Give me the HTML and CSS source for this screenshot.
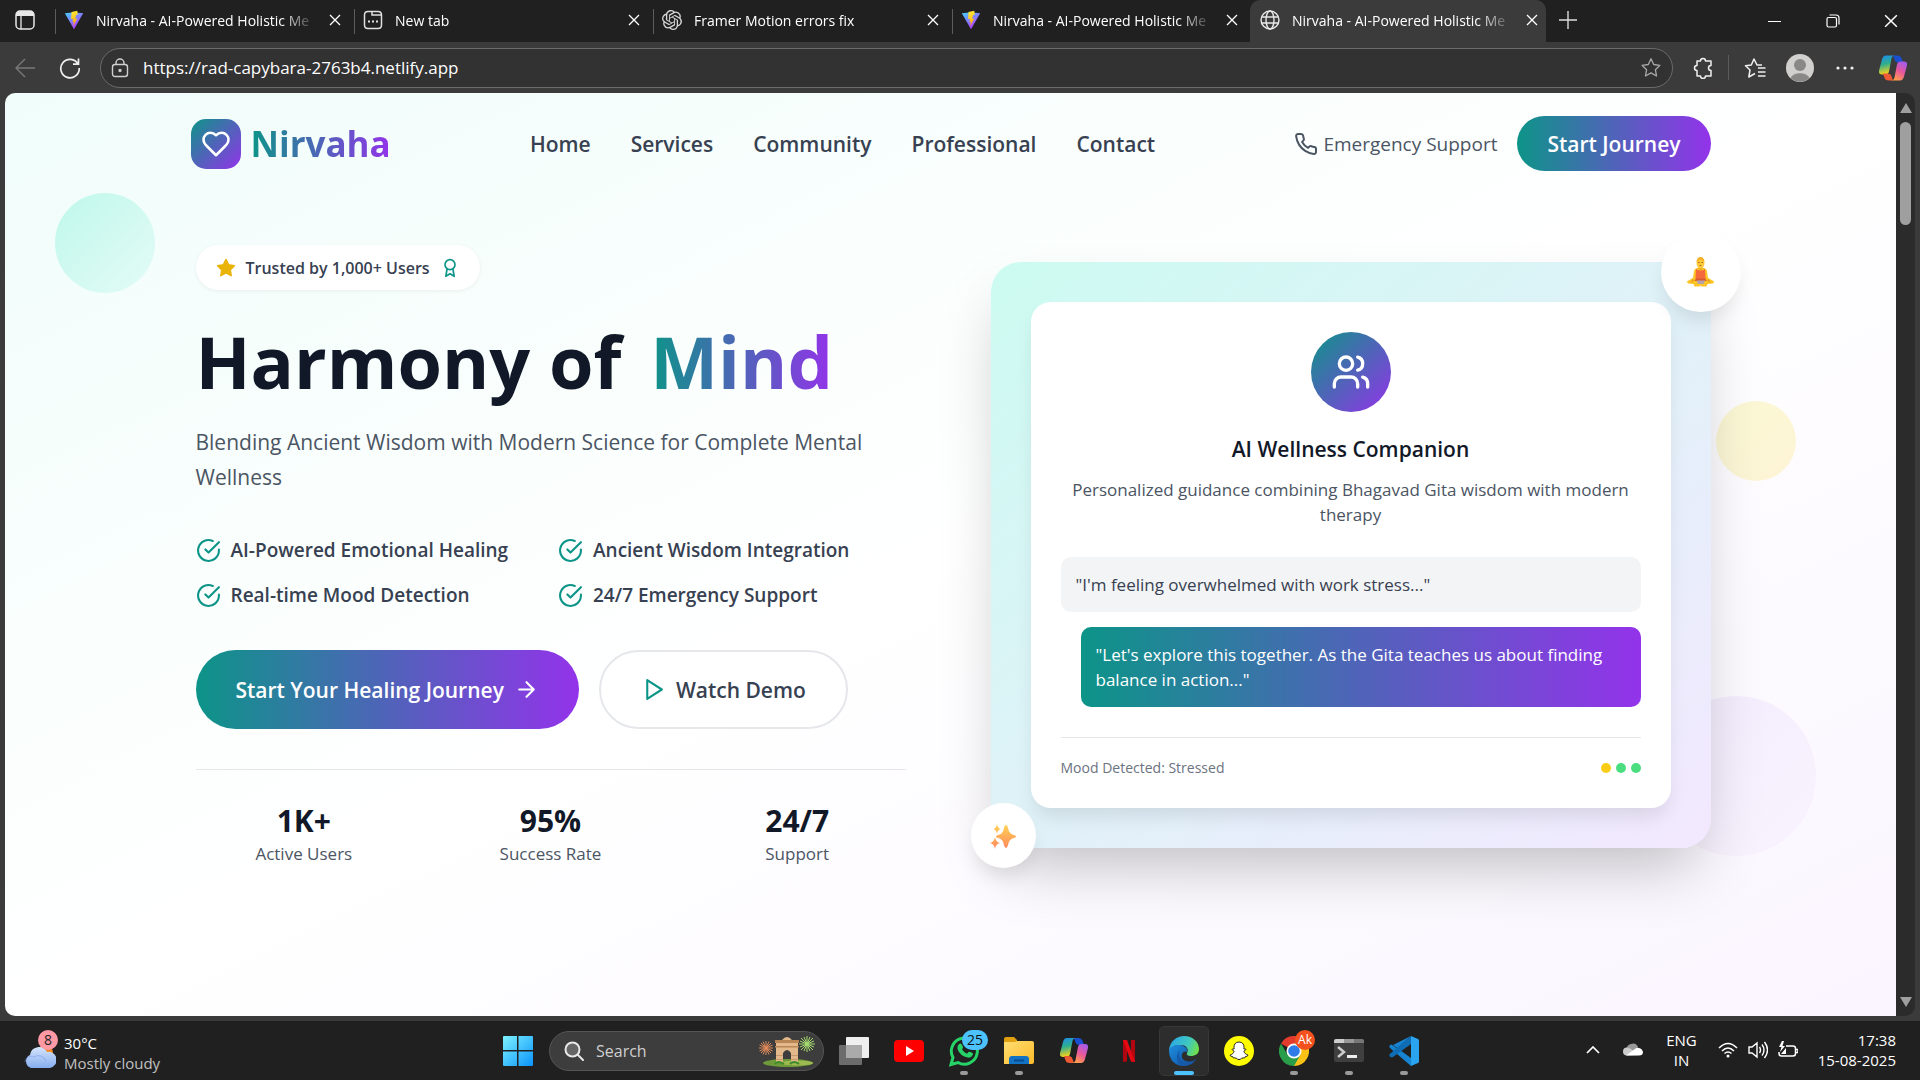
FILE: index.html
```html
<!DOCTYPE html>
<html lang="en">
<head>
<meta charset="utf-8">
<title>Nirvaha - AI-Powered Holistic Mental Wellness</title>
<link rel="stylesheet" href="styles.css">
</head>
<body>
<svg class="defs" aria-hidden="true">
  <defs>
    <linearGradient id="vite-a" x1="0" y1="0" x2=".6" y2="1"><stop offset="0" stop-color="#41d1ff"/><stop offset="1" stop-color="#bd34fe"/></linearGradient>
    <linearGradient id="vite-b" x1=".4" y1="0" x2=".6" y2="1"><stop offset="0" stop-color="#ffea3a"/><stop offset="1" stop-color="#ffa000"/></linearGradient>
    <linearGradient id="cop-a" x1="0" y1="0" x2=".2" y2="1"><stop offset="0" stop-color="#1b8df0"/><stop offset=".5" stop-color="#2fae8e"/><stop offset="1" stop-color="#f2d21f"/></linearGradient>
    <linearGradient id="cop-b" x1=".8" y1="0" x2=".3" y2="1"><stop offset="0" stop-color="#a05cf0"/><stop offset=".5" stop-color="#e9579b"/><stop offset="1" stop-color="#ffa04a"/></linearGradient>
    <linearGradient id="win" x1="0" y1="0" x2="1" y2="1" ><stop offset="0" stop-color="#7df2ff"/><stop offset="1" stop-color="#0a93fb"/></linearGradient>
    <linearGradient id="edge-a" x1="0" y1=".3" x2="1" y2=".6"><stop offset="0" stop-color="#2aa7e6"/><stop offset=".6" stop-color="#3fc8c0"/><stop offset="1" stop-color="#6fe04a"/></linearGradient>
    <linearGradient id="edge-b" x1="0" y1="0" x2="1" y2="1"><stop offset="0" stop-color="#1f8fe0"/><stop offset="1" stop-color="#0c4fa0"/></linearGradient>
    <linearGradient id="spark" x1="0" y1="0" x2="0" y2="1"><stop offset="0" stop-color="#ffd255"/><stop offset="1" stop-color="#ff8a5c"/></linearGradient>
    <linearGradient id="cloud" x1="0" y1="0" x2="0" y2="1"><stop offset="0" stop-color="#d5e4fb"/><stop offset="1" stop-color="#86aef0"/></linearGradient>
    <linearGradient id="folder" x1="0" y1="0" x2="1" y2="1"><stop offset="0" stop-color="#ffdf74"/><stop offset="1" stop-color="#fcb928"/></linearGradient>
    <symbol id="i-vite" viewBox="0 0 24 24"><path d="M1 4 10 3h4l9 1-11 19z" fill="url(#vite-a)"/><path d="M16 1 9 2.500 8.500 11l2.500-.5-.8 4 1.600-.4-.8 5 5-9-2.500.5 1-4.500 2-.3z" fill="url(#vite-b)"/></symbol>
    <symbol id="i-x" viewBox="0 0 12 12"><path d="m1 1 10 10M11 1 1 11" fill="none" stroke="currentColor" stroke-width="1.300"/></symbol>
    <symbol id="i-copilot" viewBox="0 0 28 25"><path d="M14 0h4c3 0 4 1 5 4l1 3h-4c-3 0-4-1-4.500-3z" fill="#1a4fd0"/><path d="M7 0h9c-2 0-3 1-3.500 3L10 16c-.6 2-1.500 3-3.500 3H3C0 19-.5 17 .3 14L3 4Q4 0 7 0z" fill="url(#cop-a)"/><path d="M14 25h-4c-3 0-4-1-5-4l-1-3h4c3 0 4 1 4.500 3z" fill="#ee5a34"/><path d="M21 25h-9c2 0 3-1 3.500-3L18 9c.6-2 1.500-3 3.500-3H25c3 0 3.500 2 2.700 5L25 21q-1 4-4 4z" fill="url(#cop-b)"/></symbol>
    <symbol id="i-check" viewBox="0 0 24 24"><path d="M22 11.080V12a10 10 0 1 1-5.930-9.140M9 11l3 3L22 4" fill="none" stroke="currentColor" stroke-width="2" stroke-linecap="round" stroke-linejoin="round"/></symbol>
  </defs>
</svg>

<header class="browser">
  <div class="tabs">
    <button class="workspaces" aria-label="Tab actions"><svg width="20" height="20" viewBox="0 0 20 20"><rect x="1" y="1" width="18" height="18" rx="4" fill="none" stroke="#e8e8e8" stroke-width="1.500"/><path d="M1 6V5q0-4 4-4h10q4 0 4 4v1z" fill="#e8e8e8"/><path d="M6 6v13" stroke="#e8e8e8" stroke-width="1.300"/></svg></button>
    <div class="tab"><svg width="20" height="20"><use href="#i-vite"/></svg><span class="tab-title">Nirvaha - AI-Powered Holistic Me</span><button aria-label="Close tab"><svg width="12" height="12"><use href="#i-x"/></svg></button></div>
    <div class="tab"><svg width="20" height="20" viewBox="0 0 20 20" fill="none" stroke="#e0e0e0" stroke-width="1.500"><path d="M9 1.500H5Q1.500 1.500 1.500 5v10q0 3.500 3.500 3.500h10q3.500 0 3.500-3.500V5M9 1.500V5h9.500M9 1.500h6q3.500 0 3.500 3.500"/><path d="M5 11.500h2m2 0h2m2 0h2" stroke-width="2"/></svg><span class="tab-title">New tab</span><button aria-label="Close tab"><svg width="12" height="12"><use href="#i-x"/></svg></button></div>
    <div class="tab"><svg width="20" height="20" viewBox="0 0 24 24" fill="#d8d8d8"><path d="M22.280 9.820a5.980 5.980 0 0 0-.52-4.910 6.050 6.050 0 0 0-6.510-2.900A6.070 6.070 0 0 0 4.980 4.180a5.980 5.980 0 0 0-4 2.900 6.050 6.050 0 0 0 .75 7.100 5.980 5.980 0 0 0 .51 4.910 6.050 6.050 0 0 0 6.510 2.900A5.980 5.980 0 0 0 13.260 24a6.060 6.060 0 0 0 5.770-4.210 5.990 5.990 0 0 0 4-2.900 6.060 6.060 0 0 0-.75-7.070zM13.260 22.430a4.480 4.480 0 0 1-2.880-1.040l.14-.08 4.780-2.760a.8.8 0 0 0 .39-.68v-6.740l2.020 1.170v5.620a4.500 4.500 0 0 1-4.450 4.510zM3.600 18.300a4.470 4.470 0 0 1-.54-3.010l.15.09 4.780 2.750a.77.77 0 0 0 .78 0l5.840-3.370v2.330l-4.870 2.850a4.500 4.500 0 0 1-6.140-1.640zM2.340 7.900a4.490 4.490 0 0 1 2.370-1.980v5.680a.77.77 0 0 0 .39.680l5.810 3.350-2.020 1.170-4.830-2.790A4.500 4.500 0 0 1 2.340 7.870zm16.600 3.860-5.840-3.390 2.020-1.160 4.830 2.790a4.490 4.490 0 0 1-.68 8.100v-5.680a.79.79 0 0 0-.33-.66zm2.010-3.030-.14-.08-4.780-2.780a.78.78 0 0 0-.78 0L9.410 9.230V6.900l4.860-2.810a4.500 4.500 0 0 1 6.680 4.660zM8.310 12.860l-2.020-1.160V6.070a4.500 4.500 0 0 1 7.380-3.450l-.14.08-4.780 2.760a.8.8 0 0 0-.39.68zm1.090-2.360L12 9l2.610 1.500v3L12 15l-2.610-1.500z"/></svg><span class="tab-title">Framer Motion errors fix</span><button aria-label="Close tab"><svg width="12" height="12"><use href="#i-x"/></svg></button></div>
    <div class="tab"><svg width="20" height="20"><use href="#i-vite"/></svg><span class="tab-title">Nirvaha - AI-Powered Holistic Me</span><button aria-label="Close tab"><svg width="12" height="12"><use href="#i-x"/></svg></button></div>
    <div class="tab active"><svg width="20" height="20" viewBox="0 0 20 20" fill="none" stroke="#e8e8e8" stroke-width="1.400"><circle cx="10" cy="10" r="9"/><ellipse cx="10" cy="10" rx="4" ry="9"/><path d="M2 7h16M2 13h16"/></svg><span class="tab-title">Nirvaha - AI-Powered Holistic Me</span><button aria-label="Close tab"><svg width="12" height="12"><use href="#i-x"/></svg></button></div>
    <button class="new-tab" aria-label="New tab"><svg width="18" height="18" viewBox="0 0 18 18"><path d="M9 0v18M0 9h18" stroke="#ddd" stroke-width="1.400"/></svg></button>
    <div class="window-controls">
      <button aria-label="Minimize"><svg width="14" height="14" viewBox="0 0 14 14"><path d="M0 7.500h13" stroke="#fff"/></svg></button>
      <button aria-label="Restore"><svg width="14" height="14" viewBox="0 0 14 14" fill="none" stroke="#fff" stroke-width="1.200"><rect x="1" y="3.500" width="9.500" height="9.500" rx="1.500"/><path d="M3.500 1H10q3 0 3 3v6.500"/></svg></button>
      <button aria-label="Close"><svg width="14" height="14"><use href="#i-x"/></svg></button>
    </div>
  </div>
  <div class="toolbar">
    <button class="tool dim" aria-label="Back"><svg width="22" height="22" viewBox="0 0 22 22" fill="none" stroke="currentColor" stroke-width="1.400"><path d="M21 11H2M11 2l-9 9 9 9"/></svg></button>
    <button class="tool" aria-label="Refresh"><svg width="22" height="22" viewBox="0 0 22 22" fill="none" stroke="currentColor" stroke-width="1.700"><path d="M19 7A9.200 9.200 0 1 0 20.200 11M19.500 1.500V7.200H14"/></svg></button>
    <div class="address">
      <svg width="18" height="20" viewBox="0 0 18 20" fill="none" stroke="#d0d0d0" stroke-width="1.400"><rect x="1.500" y="6.500" width="15" height="12" rx="2.500"/><path d="M5 6.500V5a4 4 0 0 1 8 0v1.500"/><circle cx="9" cy="12.500" r="1" fill="#d0d0d0"/></svg>
      <input aria-label="Address" type="text" value="https://rad-capybara-2763b4.netlify.app">
      <svg width="22" height="21" viewBox="0 0 24 24" fill="none" stroke="#a8a8a8" stroke-width="1.500" stroke-linejoin="round"><path d="m12 2 3.100 6.600 7.100.9-5.200 5 1.300 7.200L12 18.200l-6.300 3.500L7 14.500l-5.200-5 7.100-.9z"/></svg>
    </div>
    <button class="tool ext" aria-label="Extensions"><svg width="20" height="22" viewBox="0 0 20 22" fill="none" stroke="currentColor" stroke-width="1.500" stroke-linejoin="round"><path d="M4 4h3.500a2.500 2.500 0 0 1 5 0H18v4.500a2.500 2.500 0 0 0 0 5V19h-5.500a2.500 2.500 0 0 1-5 0H4v-5.500a2.500 2.500 0 0 1 0-5z"/></svg></button>
    <span class="tool-sep"></span>
    <button class="tool fav" aria-label="Favorites"><svg width="22" height="22" viewBox="0 0 22 22" fill="none" stroke="currentColor" stroke-width="1.500" stroke-linejoin="round"><path d="M18 8h-5L10 2 7.300 8 1.500 8.800 6 13l-1.200 7L11 16.500M14 11h7.500M14 15h7.500M14 19h7.500"/></svg></button>
    <button class="tool profile" aria-label="Profile"><svg width="28" height="28" viewBox="0 0 28 28"><circle cx="14" cy="14" r="14" fill="#d2d0ce"/><circle cx="14" cy="11" r="6" fill="#8a8886"/><path d="M4.500 24a10 7 0 0 1 19 0 14 14 0 0 1-19 0z" fill="#8a8886"/></svg></button>
    <button class="tool more" aria-label="Settings and more"><svg width="18" height="4" viewBox="0 0 18 4" fill="currentColor"><circle cx="2" cy="2" r="1.600"/><circle cx="9" cy="2" r="1.600"/><circle cx="16" cy="2" r="1.600"/></svg></button>
    <button class="tool copilot" aria-label="Copilot"><svg width="28" height="26"><use href="#i-copilot"/></svg></button>
  </div>
</header>

<div class="viewport">
  <div class="page">
    <span class="blob teal"></span><span class="blob yellow"></span><span class="blob purple"></span>
    <nav class="nav wrap">
      <a class="brand" href="#"><span class="brand-mark"><svg width="30" height="30" viewBox="0 0 24 24" fill="none" stroke="#fff" stroke-width="2" stroke-linejoin="round"><path d="M19 14c1.490-1.460 3-3.210 3-5.500A5.500 5.500 0 0 0 16.500 3c-1.760 0-3 .5-4.500 2-1.500-1.500-2.740-2-4.500-2A5.500 5.500 0 0 0 2 8.500c0 2.300 1.500 4.050 3 5.500l7 7Z"/></svg></span><span class="brand-name">Nirvaha</span></a>
      <div class="links"><a href="#">Home</a><a href="#">Services</a><a href="#">Community</a><a href="#">Professional</a><a href="#">Contact</a></div>
      <div class="actions">
        <a class="emergency" href="#"><svg width="24" height="24" viewBox="0 0 24 24" fill="none" stroke="currentColor" stroke-width="2" stroke-linejoin="round"><path d="M22 16.920v3a2 2 0 0 1-2.180 2 19.790 19.790 0 0 1-8.630-3.070 19.500 19.500 0 0 1-6-6 19.790 19.790 0 0 1-3.070-8.670A2 2 0 0 1 4.110 2h3a2 2 0 0 1 2 1.720 12.840 12.840 0 0 0 .7 2.810 2 2 0 0 1-.45 2.110L8.090 9.910a16 16 0 0 0 6 6l1.270-1.270a2 2 0 0 1 2.110-.45 12.840 12.840 0 0 0 2.810.7A2 2 0 0 1 22 16.920z"/></svg>Emergency Support</a>
        <button class="start">Start Journey</button>
      </div>
    </nav>

    <main class="hero wrap">
      <section class="intro">
        <p class="badge"><svg width="20" height="20" viewBox="0 0 24 24"><path d="m12 2 3.090 6.260L22 9.270l-5 4.870 1.180 6.880L12 17.770l-6.180 3.250L7 14.140 2 9.270l6.910-1.010z" fill="#eab308" stroke="#eab308" stroke-width="2" stroke-linejoin="round"/></svg>Trusted by 1,000+ Users<svg width="20" height="20" viewBox="0 0 24 24" fill="none" stroke="#0d9488" stroke-width="2" stroke-linejoin="round"><circle cx="12" cy="8" r="6"/><path d="M15.477 12.890 17 22l-5-3-5 3 1.523-9.110"/></svg></p>
        <h1>Harmony of <span>Mind</span></h1>
        <p class="lead">Blending Ancient Wisdom with Modern Science for Complete Mental Wellness</p>
        <ul class="features">
          <li><svg width="25" height="25"><use href="#i-check"/></svg>AI-Powered Emotional Healing</li>
          <li><svg width="25" height="25"><use href="#i-check"/></svg>Ancient Wisdom Integration</li>
          <li><svg width="25" height="25"><use href="#i-check"/></svg>Real-time Mood Detection</li>
          <li><svg width="25" height="25"><use href="#i-check"/></svg>24/7 Emergency Support</li>
        </ul>
        <div class="cta">
          <button class="primary">Start Your Healing Journey<svg width="25" height="25" viewBox="0 0 24 24" fill="none" stroke="#fff" stroke-width="2" stroke-linecap="round" stroke-linejoin="round"><path d="M5 12h14M12 5l7 7-7 7"/></svg></button>
          <button class="secondary"><svg width="25" height="25" viewBox="0 0 24 24" fill="none" stroke="#0d9488" stroke-width="2" stroke-linejoin="round"><path d="m6 3 14 9-14 9z"/></svg>Watch Demo</button>
        </div>
        <dl class="stats">
          <div><dd>1K+</dd><dt>Active Users</dt></div>
          <div><dd>95%</dd><dt>Success Rate</dt></div>
          <div><dd>24/7</dd><dt>Support</dt></div>
        </dl>
      </section>

      <section class="showcase">
        <div class="card">
          <span class="avatar"><svg width="40" height="40" viewBox="0 0 24 24" fill="none" stroke="#fff" stroke-width="2" stroke-linecap="round" stroke-linejoin="round"><path d="M16 21v-2a4 4 0 0 0-4-4H6a4 4 0 0 0-4 4v2"/><circle cx="9" cy="7" r="4"/><path d="M22 21v-2a4 4 0 0 0-3-3.870M16 3.130a4 4 0 0 1 0 7.750"/></svg></span>
          <h2>AI Wellness Companion</h2>
          <p class="desc">Personalized guidance combining Bhagavad Gita wisdom with modern therapy</p>
          <p class="bubble user">"I'm feeling overwhelmed with work stress..."</p>
          <p class="bubble bot">"Let's explore this together. As the Gita teaches us about finding balance in action..."</p>
          <div class="mood"><span>Mood Detected: Stressed</span><span class="dots"><i></i><i></i><i></i></span></div>
        </div>
        <span class="float lotus"><svg width="27" height="31" viewBox="0 0 27 31"><path d="M10 11q-2.500.5-3 3l-1 7-5.500 3q-1 2 1 2.500l5 .5 1 2.500h5l1-1 1 1h5l1-2.500 5-.5q2-.5 1-2.500L21 21l-1-7q-.5-2.500-3-3z" fill="#ffc526"/><path d="M6 21.500 3 26l4-2zM21 21.500l3 4.500-4-2z" fill="#e79c1c"/><path d="M9 12q4.500 3 9 0l.5 10h-10z" fill="#f56a3c"/><path d="M9 21.500h9.500l1 2.500h-12z" fill="#dc5a30"/><path d="M9.500 23.500h8.500l-1.500 3.500h-5.500z" fill="#b3a3ae"/><path d="M11.500 9h4v3q-2 2-4 0z" fill="#e8a41c"/><ellipse cx="13.500" cy="6" rx="4" ry="5.500" fill="#ffc93c"/><path d="M9.500 5q.5-5 4-5t4 5q-2-2.500-4-2.500t-4 2.500z" fill="#f3b224"/><path d="M11 5.500h1.500M14.500 5.500H16M12.700 8.500h1.600" stroke="#a5671a"/></svg></span>
        <span class="float sparkle"><svg width="26" height="26" viewBox="0 0 26 26" fill="url(#spark)"><path d="M16 2q1.500 0 2 3 1 6 6 7 2 .5 2 1.500t-2 1.500q-5 1-6 7-.5 3-2 3t-2-3q-1-6-6-7-2-.5-2-1.500t2-1.500q5-1 6-7 .5-3 2-3z"/><path d="M7 1q.5 4 3.500 5Q7.500 7 7 11 6.500 7 3.500 6 6.500 5 7 1zM5 14q.7 5 5 6-4.300 1-5 6-.7-5-5-6 4.300-1 5-6z"/></svg></span>
      </section>
    </main>
  </div>
  <div class="scrollbar"><span class="up"></span><span class="thumb"></span><span class="down"></span></div>
</div>

<footer class="taskbar">
  <button class="weather" aria-label="Weather">
    <span class="weather-icon"><svg width="32" height="26" viewBox="0 0 32 26"><circle cx="21" cy="10" r="8" fill="#f58a1c"/><path d="M7 25a7 7 0 0 1-1-13 9 9 0 0 1 17-3 8 8 0 0 1 3 16z" fill="url(#cloud)"/><path d="M1 19a6 6 0 0 1 9-5 8 8 0 0 1 12 4" fill="none" stroke="#6f97e6" opacity=".5"/></svg><b>8</b></span>
    <span class="weather-text"><span>30°C</span><span>Mostly cloudy</span></span>
  </button>
  <div class="apps">
    <button class="app" aria-label="Start"><svg width="30" height="30" viewBox="0 0 30 30"><path d="M0 1q0-1 1-1h13v14H0zM15.500 0H29q1 0 1 1v13H15.500zM0 15.500h14V30H1q-1 0-1-1zM15.500 15.500H30V29q0 1-1 1H15.500z" fill="url(#win)"/></svg></button>
    <label class="search"><svg width="20" height="20" viewBox="0 0 20 20" fill="none" stroke="#e8e8e8" stroke-width="2"><circle cx="8.500" cy="8.500" r="7" fill="#666"/><path d="m14 14 5 5" stroke-linecap="round"/></svg><input type="text" placeholder="Search" aria-label="Search">
      <svg width="56" height="32" viewBox="0 0 56 32"><ellipse cx="29" cy="28" rx="25" ry="4" fill="#6f9a3a"/><ellipse cx="38" cy="28" rx="16" ry="2.500" fill="#9dbb50"/><path d="m7 6 0 14M0 13h14M2 8l10 10M12 8 2 18M4 6.500l6 13M10 6.500l-6 13M.6 10l13 6M13.600 10l-13 6" stroke="#e08a5a" stroke-width="1"/><path d="M48 1v16M40 9h16M42 3l12 12M54 3 42 15M45 2l6 14M51 2l-6 14M41 6l14 6M55 6l-14 6" stroke="#a8dc70" stroke-width="1"/><path d="M17 28V5h6q5-6 10 0h6v23h-7V18q-4-6-8 0v10z" fill="#e3b98c"/><path d="M16 5h24v3H16zM16 11h24v1.500H16z" fill="#b98555"/><path d="M17 20h7v1h-7zM32 20h7v1h-7zM17 24h7v1h-7zM32 24h7v1h-7z" fill="#c89868"/><path d="M16 29q3-4 9 0M31 29q4-4 9 0" stroke="#3f8a2a" stroke-width="2" fill="none"/></svg></label>
    <button class="app" aria-label="Task view"><svg width="30" height="28" viewBox="0 0 30 28"><rect x="7" width="23" height="21" rx="1" fill="#efefef"/><rect y="8" width="23" height="20" rx="1" fill="#6c6c6c"/><path d="M7 8h16v13H7z" fill="#aaa"/></svg></button>
    <button class="app" aria-label="YouTube"><svg width="30" height="22" viewBox="0 0 30 22"><rect width="30" height="22" rx="4" fill="#f00"/><path d="m12 6 8 5-8 5z" fill="#fff"/></svg></button>
    <button class="app running" aria-label="WhatsApp"><svg width="32" height="32" viewBox="0 0 32 32"><path d="M3 29.500 5 22.500a13 13 0 1 1 5 5z" fill="none" stroke="#25d366" stroke-width="3"/><path d="M11 9q2-1.500 3 1l1 2q.3 1-1 2.200 2 3.500 5 4.600l1.500-1.800q.8-.6 1.500-.2l2.500 1.300q1 .6.300 2-1.500 3-5 2.500Q12 21 9.500 14 9 10.500 11 9z" fill="#25d366"/></svg><b class="count">25</b></button>
    <button class="app running" aria-label="File Explorer"><svg width="30" height="28" viewBox="0 0 30 28"><path d="M0 2q0-2 2-2h8l3 3v5H0z" fill="#e0a010"/><path d="M0 6q0-1 1-1h10l2-1h15q2 0 2 2v19q0 2-2 2H0z" fill="url(#folder)"/><path d="M5 27v-5q0-3 3-3h14q3 0 3 3v5z" fill="#1272c4"/><path d="M10 23.500h10" stroke="#0a4c90" stroke-width="2"/></svg></button>
    <button class="app" aria-label="Copilot"><svg width="28" height="25"><use href="#i-copilot"/></svg></button>
    <button class="app" aria-label="Netflix"><svg width="12" height="22" viewBox="0 0 12 22"><path d="M0 0h4v21.500l-4 .5zM8 0h4v22l-4-.5z" fill="#b1060f"/><path d="M0 0h4l8 22-4-.5z" fill="#e50914"/></svg></button>
    <button class="app current" aria-label="Microsoft Edge"><svg width="30" height="30" viewBox="0 0 30 30"><path d="M0 14C1 5 8 0 15 0c9 0 15 6 15 13 0 5-4 7-8 7-3 0-5-1-4-3 2-3 0-8-6-8-6 0-10 2-12 5z" fill="url(#edge-a)"/><path d="M0 14C2 10 7 8.500 11 9c5 .5 8 4 7 7-1-1-4-1-5 2-2 6 5 9 11 7-3 4-8 5-11 5C4 29 0 22 0 14z" fill="url(#edge-b)"/><path d="M11 14c-3 7 2 14 9 12 3 0 6-2 7-3.500.5 1-4 7.500-12 7.500-6-1-10-9-4-16z" fill="#1559a8"/></svg></button>
    <button class="app" aria-label="Snapchat"><svg width="30" height="30" viewBox="0 0 30 30"><circle cx="15" cy="15" r="15" fill="#fffc00"/><path d="M15 6c3.500 0 5.200 2.500 5 5.500l-.1 1.500c1 .3 1.800-.5 2 .3s-1.500 1.300-2 1.900c.5 2 2 3.300 4 3.800.2 1.200-1.700 1.400-2.700 1.700l-.5 1.200c-1 0-2-.2-3 .4-1 .7-1.700 1.300-2.700 1.300s-1.700-.6-2.700-1.300c-1-.6-2-.4-3-.4l-.5-1.200c-1-.3-2.900-.5-2.700-1.700 2-.5 3.500-1.800 4-3.800-.5-.6-2.200-1.100-2-1.900s1 0 2-.3L10 11.500C9.800 8.500 11.500 6 15 6z" fill="#fff" stroke="#222" stroke-width="1"/></svg></button>
    <button class="app running" aria-label="Google Chrome"><svg width="30" height="30" viewBox="0 0 30 30"><path d="M15 15 2 7.500A15 15 0 0 1 28 7.500H15z" fill="#e33b2e"/><path d="M15 15v15A15 15 0 0 0 28 7.500H15z" fill="#fbc116"/><path d="M8.500 18.700 2 7.500A15 15 0 0 0 15 30l6.500-11.200L15 15z" fill="#2a9d4a"/><circle cx="15" cy="15" r="7.500" fill="#fff"/><circle cx="15" cy="15" r="5.800" fill="#2f7be8"/></svg><b class="who">Ak</b></button>
    <button class="app running" aria-label="Terminal"><svg width="30" height="23" viewBox="0 0 30 23"><rect width="30" height="23" rx="2" fill="#3f3f3f"/><path d="M0 4V2q0-2 2-2h8v4z" fill="#ccc"/><path d="M10 0h10v4H10z" fill="#999"/><path d="M20 0h8q2 0 2 2v2H20z" fill="#777"/><path d="m4 8 6 5-6 5" fill="none" stroke="#ccc" stroke-width="2.500"/><path d="M13 17.500h10" stroke="#eee" stroke-width="3"/></svg></button>
    <button class="app running" aria-label="Visual Studio Code"><svg width="30" height="30" viewBox="0 0 30 30"><path d="M22 0 8 12.500 2.500 8.500.5 9.500v2L22 30V22L4 9z" fill="#1684d0"/><path d="m22 8-18 13-1.500.5-2-1.200v-2L22 0z" fill="#0f6db5"/><path d="m22 0 7 3q1 .5 1 1.500v21q0 1-1 1.500l-7 3z" fill="#2aa4f0"/></svg></button>
  </div>
  <div class="tray">
    <svg class="chev" width="14" height="8" viewBox="0 0 14 8" fill="none" stroke="#fff" stroke-width="1.700"><path d="m1 7 6-6 6 6"/></svg>
    <svg class="one" width="20" height="13" viewBox="0 0 20 13"><path d="M4 8a5 5 0 0 1 4-7q5-2 7 3l-4 5z" fill="#999"/><path d="M4 12.500a4 4 0 0 1 0-8q2 0 4 1.500l8 6z" fill="#ccc"/><path d="M3 12.500 12 6q2-2 4-1 3 .5 4 4 0 3.500-4 3.500z" fill="#fff"/></svg>
    <span class="lang"><span>ENG</span><span>IN</span></span>
    <svg width="20" height="16" viewBox="0 0 20 16" fill="none" stroke="#fff" stroke-width="1.500"><path d="M1 6q9-9 18 0M4 9q6-6 12 0M6.500 11.500q3.500-3 7 0"/><circle cx="10" cy="14" r="1.500" fill="#fff" stroke="none"/></svg>
    <svg width="20" height="18" viewBox="0 0 20 18" fill="none" stroke="#fff" stroke-width="1.400"><path d="M1 6h3l5-4v14l-5-4H1zM11.500 6q2 3 0 6M14 3.500q4 5.500 0 11M16.500 1q6 8 0 16"/></svg>
    <svg width="20" height="17" viewBox="0 0 20 17" fill="none" stroke="#fff" stroke-width="1.500"><path d="M8 5h7q2.500 0 2.500 2.500v5q0 2.500-2.500 2.500H3.500Q1 15 1 12.500V11M17.500 8.500H20v3h-2.500"/><path d="M4 0 1 6h2.500L2 11l5-6H4.500L6 0zM3 13l5-6v6z" fill="#fff" stroke="none"/></svg>
    <span class="clock"><span>17:38</span><span>15-08-2025</span></span>
  </div>
</footer>
</body>
</html>
```
FILE: styles.css
```css
* { box-sizing: border-box; }
:root {
  --brand-gradient: linear-gradient(to right, #0d9488, #9333ea);
  --brand-diagonal: linear-gradient(to bottom right, #0d9488, #9333ea);
}
body {
  margin: 0;
  min-height: 100vh;
  display: flex;
  flex-direction: column;
  background: #3b3b3b;
  font-family: "Segoe UI", "Open Sans", "Noto Sans", sans-serif;
  color: #374151;
}
h1, h2, p, ul, dl, dd { margin: 0; padding: 0; }
button { border: 0; padding: 0; background: none; font: inherit; color: inherit; }
input { border: 0; padding: 0; background: none; font: inherit; color: inherit; outline: 0; min-width: 0; }
a { color: inherit; text-decoration: none; }
svg { display: block; flex: none; }
.defs { position: absolute; width: 0; height: 0; }

/* Browser chrome */
.browser { color: #fff; }
.tabs { display: flex; height: 42px; background: #202020; font-size: 14px; }
.workspaces { width: 50px; display: grid; place-items: center; padding-bottom: 2px; }
.tab {
  flex: 0 1 299px;
  display: flex;
  align-items: center;
  gap: 12px;
  padding: 0 7px 2px 14px;
  position: relative;
  min-width: 0;
}
.tab::before { content: ""; position: absolute; left: 5px; top: 9px; height: 25px; width: 1px; background: #5c5c5c; }
.tab.active { margin-left: 4px; padding-left: 10px; flex-basis: 296px; background: #3b3b3b; border-radius: 10px 10px 0 0; }
.tab.active::before { display: none; }
.tab-title {
  flex: 1;
  overflow: hidden;
  white-space: nowrap;
  mask-image: linear-gradient(to right, #000 84%, transparent);
}
.tab > button { width: 14px; display: grid; place-items: center; }
.new-tab { width: 44px; display: grid; place-items: center; padding-bottom: 2px; }
.window-controls { margin-left: auto; display: flex; }
.window-controls button { width: 58px; display: grid; place-items: center; }
.toolbar { display: flex; align-items: center; height: 51px; padding: 0 13px 0 14px; }
.tool { display: grid; place-items: center; flex: none; color: #f0f0f0; }
.tool.dim { color: #787878; margin-right: 23px; }
.address {
  flex: 1;
  display: flex;
  align-items: center;
  gap: 14px;
  height: 40px;
  margin: 0 20px 0 19px;
  padding: 0 10px;
  border: 1px solid #6b6b6b;
  border-radius: 20px;
  background: #323232;
}
.address input { flex: 1; font-size: 17px; }
.tool-sep { width: 1px; height: 25px; margin: 0 15px; background: #5c5c5c; }
.tool.profile { margin: 0 22px 0 20px; }
.tool.copilot { margin-left: 25px; }

/* Page viewport */
.viewport { flex: 1; display: flex; padding: 0 5px 5px; }
.page {
  flex: 1;
  position: relative;
  overflow: hidden;
  border-radius: 10px 0 0 10px;
  background: linear-gradient(to bottom right, #f0fdfa, #fff 50%, #faf5ff);
}
.wrap { width: 100%; max-width: 1560px; margin: 0 auto; padding: 0 20px; position: relative; }
.scrollbar {
  width: 19px;
  display: flex;
  flex-direction: column;
  align-items: center;
  padding: 10px 0 9px;
  background: #2b2b2b;
  border-radius: 0 10px 10px 0;
}
.scrollbar .up, .scrollbar .down { border: 6px solid transparent; }
.scrollbar .up { border-top: 0; border-bottom: 10px solid #9f9f9f; }
.scrollbar .down { border-bottom: 0; border-top: 10px solid #9f9f9f; margin-top: auto; }
.scrollbar .thumb { width: 11px; height: 103px; margin-top: 9px; border-radius: 6px; background: #9f9f9f; }
.blob { position: absolute; border-radius: 50%; }
.blob.teal { left: 50px; top: 100px; width: 100px; height: 100px; background: linear-gradient(to bottom right, #bff8eb, #e4fbf7); }
.blob.yellow { right: 100px; top: 308px; width: 80px; height: 80px; background: linear-gradient(to bottom right, #fbf8d4, #fdf4d6); }
.blob.purple { right: 80px; top: 603px; width: 160px; height: 160px; background: linear-gradient(to bottom right, #f3ebfd, #f9f3fe); }

.nav { display: flex; align-items: center; justify-content: space-between; padding-top: 23px; }
.brand { display: flex; align-items: center; gap: 10px; }
.brand-mark { width: 50px; height: 50px; display: grid; place-items: center; border-radius: 15px; background: var(--brand-diagonal); }
.brand-name { font-size: 35px; line-height: 50px; font-weight: 700; background: var(--brand-gradient); background-clip: text; color: transparent; }
.links { display: flex; gap: 40px; font-size: 21px; font-weight: 600; }
.actions { display: flex; align-items: center; gap: 20px; }
.emergency { display: flex; align-items: center; gap: 5px; font-size: 19px; color: #4b5563; }
.start { height: 55px; padding: 0 30px; border-radius: 28px; background: var(--brand-gradient); color: #fff; font-size: 21px; font-weight: 600; }

.hero { display: grid; grid-template-columns: 1fr 1fr; gap: 80px; align-items: center; padding-top: 74px; padding-bottom: 100px; }
.intro { padding: 0 5px; min-width: 0; }
.badge {
  display: inline-flex;
  align-items: center;
  gap: 10px;
  height: 45px;
  padding: 0 20px;
  border-radius: 23px;
  background: #fff;
  box-shadow: 0 1px 4px #0000000f;
  font-size: 16px;
  font-weight: 600;
}
h1 { margin-top: 26px; font-size: 72px; line-height: 90px; font-weight: 700; color: #111827; white-space: nowrap; }
h1 span { margin-left: 10px; background: var(--brand-gradient); background-clip: text; color: transparent; }
.lead { margin-top: 19px; font-size: 21px; line-height: 35px; color: #4b5563; }
.features { display: grid; grid-template-columns: 1fr 1fr; gap: 15px; margin-top: 40px; list-style: none; font-size: 19px; line-height: 30px; font-weight: 600; }
.features li { display: flex; align-items: center; gap: 10px; white-space: nowrap; }
.features svg { color: #0d9488; }
.cta { display: flex; gap: 20px; margin-top: 40px; font-size: 21px; font-weight: 600; }
.cta button { display: flex; align-items: center; gap: 10px; height: 79px; padding: 0 40px; border-radius: 40px; }
.primary { background: var(--brand-gradient); color: #fff; }
.secondary { border: 2px solid #e5e7eb; background: #fff; }
.stats { display: grid; grid-template-columns: repeat(3, 1fr); gap: 30px; margin-top: 40px; padding-top: 30px; border-top: 1px solid #e5e7eb; text-align: center; }
.stats div { display: flex; flex-direction: column; }
.stats dd { font-size: 30px; line-height: 42px; font-weight: 700; color: #111827; }
.stats dt { font-size: 17px; line-height: 23px; color: #4b5563; }

.showcase { position: relative; padding: 40px; border-radius: 30px; background: linear-gradient(to bottom right, #ccfbf1, #f3e8ff); box-shadow: 0 31px 62px -15px #00000040; }
.card { padding: 30px; border-radius: 20px; background: #fff; box-shadow: 0 12px 19px -4px #0000001a; font-size: 17px; line-height: 25px; }
.avatar { width: 80px; height: 80px; margin: 0 auto; display: grid; place-items: center; border-radius: 50%; background: var(--brand-diagonal); }
h2 { margin-top: 20px; font-size: 21px; line-height: 35px; font-weight: 600; color: #111827; text-align: center; }
.desc { margin-top: 10px; color: #4b5563; text-align: center; }
.bubble { margin-top: 15px; padding: 15px; border-radius: 10px; }
.desc + .bubble { margin-top: 30px; }
.bubble.user { background: #f3f4f6; }
.bubble.bot { margin-left: 20px; background: var(--brand-gradient); color: #fff; }
.mood { display: flex; align-items: center; justify-content: space-between; margin-top: 30px; padding-top: 20px; border-top: 1px solid #e5e7eb; font-size: 14px; line-height: 20px; color: #6b7280; }
.dots { display: flex; gap: 5px; }
.dots i { width: 10px; height: 10px; border-radius: 50%; background: #4ade80; }
.dots i:first-child { background: #facc15; }
.float { position: absolute; display: grid; place-items: center; border-radius: 50%; background: #fff; box-shadow: 0 12px 19px -4px #0000001a; }
.lotus { top: -30px; right: -30px; width: 80px; height: 80px; }
.sparkle { left: -20px; bottom: -20px; width: 65px; height: 65px; }

/* Taskbar */
.taskbar {
  display: grid;
  grid-template-columns: 1fr auto 1fr;
  align-items: center;
  height: 59px;
  background: #202020;
  color: #fff;
  font-size: 15px;
  line-height: 20px;
}
.weather { display: flex; align-items: center; gap: 8px; padding: 4px 0 0 24px; text-align: left; }
.weather-icon { position: relative; padding-top: 6px; }
.weather-icon b { position: absolute; top: -7px; right: -2px; width: 20px; height: 20px; border-radius: 50%; background: #ff99a4; color: #222; font-size: 14px; font-weight: 400; text-align: center; }
.weather-text, .lang, .clock { display: flex; flex-direction: column; }
.weather-text span + span { color: #c0c0c0; }
.apps { display: flex; align-items: center; gap: 5px; padding-left: 2px; }
.app { position: relative; width: 50px; height: 50px; display: grid; place-items: center; border-radius: 5px; }
.running::after, .current::after { content: ""; position: absolute; bottom: 1px; left: 21px; width: 8px; height: 4px; border-radius: 2px; background: #9a9a9a; }
.current { background: #2d2d2d; border: 1px solid #373737; }
.current::after { left: 14px; bottom: 0; width: 20px; background: #4cc2ff; }
.count, .who { position: absolute; font-weight: 400; border-radius: 10px; height: 20px; text-align: center; }
.count { top: 4px; left: 23px; width: 26px; background: #4cc2ff; color: #111; font-size: 14px; }
.who { top: 4px; left: 26px; width: 20px; background: #f4511e; font-size: 12px; }
.search { display: flex; align-items: center; gap: 12px; width: 275px; height: 40px; margin-left: 1px; padding: 0 8px 0 14px; border: 1px solid #555; border-radius: 20px; background: #3d3d3d; font-size: 16px; }
.search input { flex: 1; width: 0; }
.search input::placeholder { color: #cfcfcf; opacity: 1; }
.tray { display: flex; align-items: center; justify-content: flex-end; gap: 10px; padding: 0 24px 2px 0; }
.chev { margin-right: 13px; }
.one { margin-right: 13px; }
.lang { align-items: center; margin-right: 11px; }
.clock { align-items: flex-end; margin-left: 10px; }
```
